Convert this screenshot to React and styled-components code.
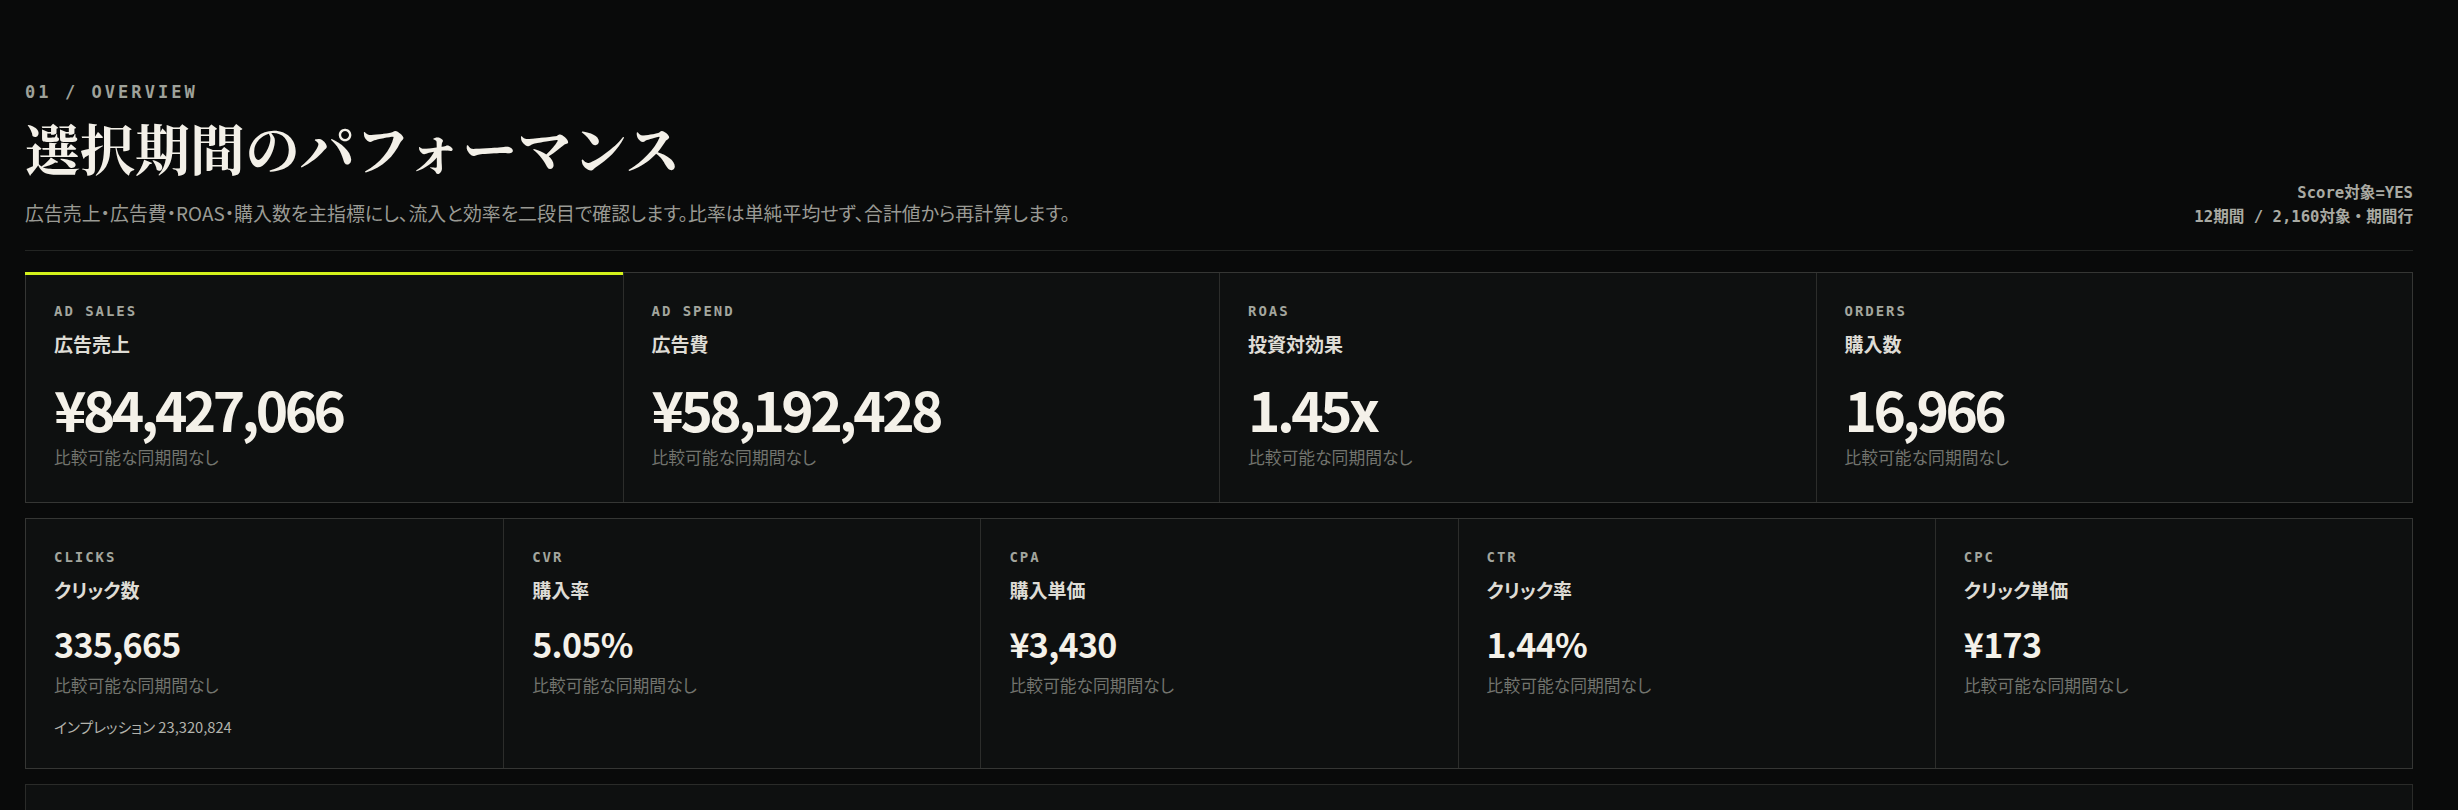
import React from "react";
import styled, { createGlobalStyle, css } from "styled-components";

const GlobalStyle = createGlobalStyle`
  html, body {
    margin: 0;
    padding: 0;
    background: #090a0a;
  }
  body {
    font-family: "Noto Sans CJK JP", "Noto Sans", sans-serif;
    font-feature-settings: "palt";
    color: #f3f0e8;
    overflow: hidden;
  }
`;

const mono = `"DejaVu Sans Mono", "Liberation Mono", "Noto Sans CJK JP", monospace`;

const Page = styled.main`
  padding: 82px 45px 0 25px;
`;

const Header = styled.header`
  display: flex;
  justify-content: space-between;
  align-items: flex-end;
  padding-bottom: 23px;
  border-bottom: 1px solid #232523;
`;

const Eyebrow = styled.div`
  font-family: ${mono};
  font-weight: 700;
  font-size: 17px;
  line-height: 20px;
  letter-spacing: 0.18em;
  color: #9fa29a;
`;

const Title = styled.h1`
  margin: 14px 0 0;
  font-family: "Noto Serif CJK JP", "Liberation Serif", serif;
  font-feature-settings: normal;
  font-weight: 700;
  font-size: 55px;
  line-height: 62px;
  color: #f3f0e8;
`;

const Lead = styled.p`
  margin: 21px 0 0;
  font-size: 18.9px;
  line-height: 28px;
  color: #9a9a94;
`;

const Meta = styled.div`
  font-family: ${mono};
  font-feature-settings: normal;
  font-weight: 700;
  font-size: 15.6px;
  line-height: 24px;
  text-align: right;
  color: #a9aaa3;
  margin-bottom: -2px;
`;

const Grid = styled.section`
  display: grid;
  grid-template-columns: repeat(${(p) => p.$cols}, 1fr);
  margin-top: ${(p) => p.$gap}px;
  border: 1px solid #353634;
  background: #0e1010;
`;

const Card = styled.article`
  position: relative;
  padding: 29px 28px ${(p) => (p.$size === "lg" ? 32 : 31)}px;
  border-left: 1px solid #2c2d2b;
  min-height: ${(p) => (p.$size === "lg" ? 168 : 186)}px;

  &:first-child {
    border-left: none;
  }

  ${(p) =>
    p.$accent &&
    css`
      &::before {
        content: "";
        position: absolute;
        left: -1px;
        right: 0;
        top: -1px;
        height: 3px;
        background: #d3f21b;
      }
    `}
`;

const Code = styled.div`
  font-family: ${mono};
  font-weight: 700;
  font-size: 14px;
  line-height: 18px;
  letter-spacing: 0.14em;
  color: #a3a69e;
`;

const Name = styled.div`
  margin-top: 11px;
  font-size: 19px;
  font-weight: 700;
  line-height: 26px;
  color: #dedcd5;
`;

const Value = styled.div`
  font-weight: 700;
  color: #f4f1e9;
  ${(p) =>
    p.$size === "lg"
      ? css`
          margin-top: 24px;
          font-size: 55px;
          line-height: 55px;
          letter-spacing: -0.065em;
        `
      : css`
          margin-top: 24px;
          font-size: 34px;
          line-height: 34px;
          letter-spacing: -0.02em;
        `}
`;

const Delta = styled.div`
  margin-top: ${(p) => (p.$size === "lg" ? 10 : 13)}px;
  font-size: 16.8px;
  line-height: 22px;
  color: #72746e;
`;

const Extra = styled.div`
  margin-top: 21px;
  font-size: 14.7px;
  line-height: 20px;
  color: #b3b3ac;
`;

const Panel = styled.section`
  margin-top: 15px;
  height: 120px;
  border: 1px solid #2a2b29;
  background: #0e1010;
`;

const primary = [
  { code: "AD SALES", name: "広告売上", value: "¥84,427,066", accent: true },
  { code: "AD SPEND", name: "広告費", value: "¥58,192,428" },
  { code: "ROAS", name: "投資対効果", value: "1.45x" },
  { code: "ORDERS", name: "購入数", value: "16,966" },
];

const secondary = [
  { code: "CLICKS", name: "クリック数", value: "335,665", extra: "インプレッション 23,320,824" },
  { code: "CVR", name: "購入率", value: "5.05%" },
  { code: "CPA", name: "購入単価", value: "¥3,430" },
  { code: "CTR", name: "クリック率", value: "1.44%" },
  { code: "CPC", name: "クリック単価", value: "¥173" },
];

function Metric({ item, size }) {
  return (
    <Card $size={size} $accent={item.accent}>
      <Code>{item.code}</Code>
      <Name>{item.name}</Name>
      <Value $size={size}>{item.value}</Value>
      <Delta $size={size}>比較可能な同期間なし</Delta>
      {item.extra && <Extra>{item.extra}</Extra>}
    </Card>
  );
}

export default function App() {
  return (
    <>
      <GlobalStyle />
      <Page>
        <Header>
          <div>
            <Eyebrow>01 / OVERVIEW</Eyebrow>
            <Title>選択期間のパフォーマンス</Title>
            <Lead>
              広告売上・広告費・ROAS・購入数を主指標にし、流入と効率を二段目で確認します。比率は単純平均せず、合計値から再計算します。
            </Lead>
          </div>
          <Meta>
            <div>Score対象=YES</div>
            <div>12期間 / 2,160対象・期間行</div>
          </Meta>
        </Header>

        <Grid $cols={4} $gap={21}>
          {primary.map((m) => (
            <Metric key={m.code} item={m} size="lg" />
          ))}
        </Grid>

        <Grid $cols={5} $gap={15}>
          {secondary.map((m) => (
            <Metric key={m.code} item={m} size="sm" />
          ))}
        </Grid>

        <Panel />
      </Page>
    </>
  );
}
